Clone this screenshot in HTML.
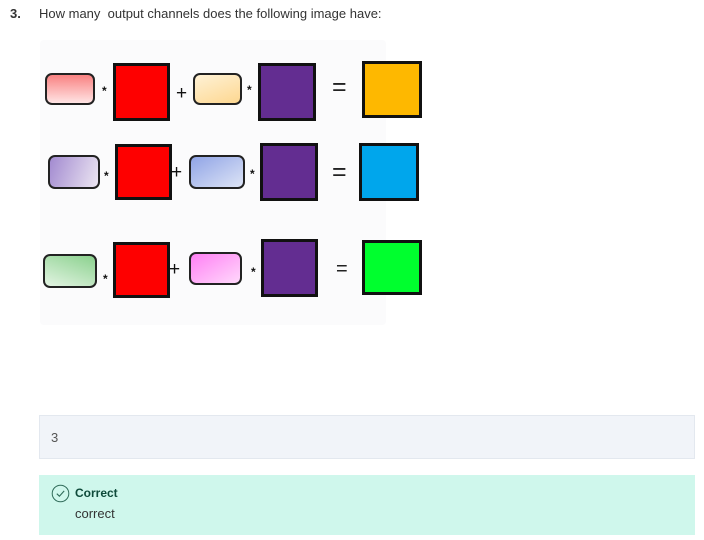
<!DOCTYPE html>
<html><head><style>
body{margin:0;width:704px;height:540px;background:#fff;position:relative;font-family:"Liberation Sans",sans-serif;overflow:hidden}
.a{position:absolute;box-sizing:border-box}
.sq{border:3px solid #111}
.pl{border:2px solid #222;border-radius:7px}
.op{position:absolute;font-size:19px;color:#111;line-height:1}
.st{position:absolute;font-size:12px;font-weight:bold;color:#111;line-height:1}
.eq{position:absolute;font-size:25px;color:#222;line-height:1}
</style></head><body>
<div class="a" style="left:10px;top:6px;font-size:13px;font-weight:bold;color:#333">3.</div>
<div class="a" style="left:39px;top:6px;font-size:13px;color:#333">How many&nbsp; output channels does the following image have:</div>
<div class="a" style="left:40px;top:40px;width:346px;height:285px;background:#fbfbfc;border-radius:4px"></div>

<div class="a pl" style="left:45px;top:73px;width:50px;height:32px;background:linear-gradient(#f98282,#ffe4e4)"></div>
<div class="st" style="left:102px;top:85px">*</div>
<div class="a sq" style="left:113px;top:63px;width:57px;height:58px;background:#fe0000"></div>
<div class="op" style="left:176px;top:84px">+</div>
<div class="a pl" style="left:193px;top:73px;width:49px;height:32px;background:linear-gradient(160deg,#fff2d6,#fdd790)"></div>
<div class="st" style="left:247px;top:84px">*</div>
<div class="a sq" style="left:258px;top:63px;width:58px;height:58px;background:#632d91"></div>
<div class="eq" style="left:332px;top:75px">=</div>
<div class="a sq" style="left:362px;top:61px;width:60px;height:57px;background:#feb800"></div>

<div class="a pl" style="left:48px;top:155px;width:52px;height:34px;background:linear-gradient(110deg,#a28ad0,#ece6f2)"></div>
<div class="st" style="left:104px;top:170px">*</div>
<div class="a sq" style="left:115px;top:144px;width:57px;height:56px;background:#fe0000"></div>
<div class="op" style="left:171px;top:163px">+</div>
<div class="a pl" style="left:189px;top:155px;width:56px;height:34px;background:linear-gradient(150deg,#90a4e6,#dde4f6)"></div>
<div class="st" style="left:250px;top:168px">*</div>
<div class="a sq" style="left:260px;top:143px;width:58px;height:58px;background:#632d91"></div>
<div class="eq" style="left:332px;top:160px">=</div>
<div class="a sq" style="left:359px;top:143px;width:60px;height:58px;background:#00a6ec"></div>

<div class="a pl" style="left:43px;top:254px;width:54px;height:34px;background:linear-gradient(200deg,#8bd18e,#e3f4e3)"></div>
<div class="st" style="left:103px;top:273px">*</div>
<div class="a sq" style="left:113px;top:242px;width:57px;height:56px;background:#fe0000"></div>
<div class="op" style="left:169px;top:260px">+</div>
<div class="a pl" style="left:189px;top:252px;width:53px;height:33px;background:linear-gradient(150deg,#ff80f4,#ffd8fb)"></div>
<div class="st" style="left:251px;top:266px">*</div>
<div class="a sq" style="left:261px;top:239px;width:57px;height:58px;background:#632d91"></div>
<div class="eq" style="left:336px;top:259px;font-size:20px">=</div>
<div class="a sq" style="left:362px;top:240px;width:60px;height:55px;background:#00ff2e"></div>

<div class="a" style="left:39px;top:415px;width:656px;height:44px;background:#f1f4f9;border:1px solid #e3e8ef"></div>
<div class="a" style="left:51px;top:430px;font-size:13px;color:#555">3</div>
<div class="a" style="left:39px;top:475px;width:656px;height:60px;background:#cff7ec"></div>
<svg class="a" style="left:51px;top:484px" width="19" height="19" viewBox="0 0 19 19"><circle cx="9.5" cy="9.5" r="8.3" fill="none" stroke="#2f6b59" stroke-width="1"/><path d="M5.8 9.7 L8.4 12.2 L13.2 6.9" fill="none" stroke="#2f6b59" stroke-width="1.1"/></svg>
<div class="a" style="left:75px;top:486px;font-size:12px;font-weight:bold;color:#0e4a3a">Correct</div>
<div class="a" style="left:75px;top:506px;font-size:13px;color:#333">correct</div>
</body></html>
